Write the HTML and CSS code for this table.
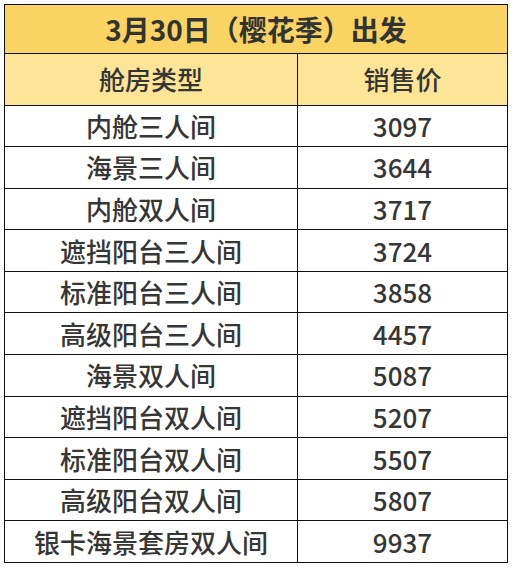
FILE: index.html
```html
<!DOCTYPE html>
<html lang="zh-CN">
<head>
<meta charset="utf-8">
<link rel="stylesheet" href="styles.css">
</head>
<body>
<table class="price-table">
  <colgroup><col class="col-type"><col class="col-price"></colgroup>
  <thead>
    <tr class="title-row"><th colspan="2">3月30日（樱花季）出发</th></tr>
    <tr class="head-row"><th>舱房类型</th><th>销售价</th></tr>
  </thead>
  <tbody>
    <tr><td>内舱三人间</td><td>3097</td></tr>
    <tr><td>海景三人间</td><td>3644</td></tr>
    <tr><td>内舱双人间</td><td>3717</td></tr>
    <tr><td>遮挡阳台三人间</td><td>3724</td></tr>
    <tr><td>标准阳台三人间</td><td>3858</td></tr>
    <tr><td>高级阳台三人间</td><td>4457</td></tr>
    <tr><td>海景双人间</td><td>5087</td></tr>
    <tr><td>遮挡阳台双人间</td><td>5207</td></tr>
    <tr><td>标准阳台双人间</td><td>5507</td></tr>
    <tr><td>高级阳台双人间</td><td>5807</td></tr>
    <tr><td>银卡海景套房双人间</td><td>9937</td></tr>
  </tbody>
</table>
</body>
</html>
```

FILE: styles.css
```css
html, body {
  margin: 0;
  padding: 0;
  background: #ffffff;
}
body {
  padding: 4px 0 0 4px;
  font-family: "Noto Sans CJK SC", "Noto Sans", sans-serif;
  color: #333333;
}
.price-table {
  border-collapse: collapse;
  width: 503px;
  table-layout: fixed;
}
.col-type { width: 293px; }
.col-price { width: 210px; }
.price-table th,
.price-table td {
  border: 1px solid #111111;
  text-align: center;
  padding: 0;
  line-height: 1;
}
.title-row th {
  background: #f9d462;
  height: 48px;
  font-size: 28px;
  font-weight: 700;
  color: #333333;
}
.head-row th {
  background: #fde597;
  height: 50.5px;
  font-size: 26px;
  font-weight: 500;
  color: #353535;
}
.price-table td {
  height: 40.6px;
  font-size: 26px;
  font-weight: 500;
  color: #363636;
}
```
